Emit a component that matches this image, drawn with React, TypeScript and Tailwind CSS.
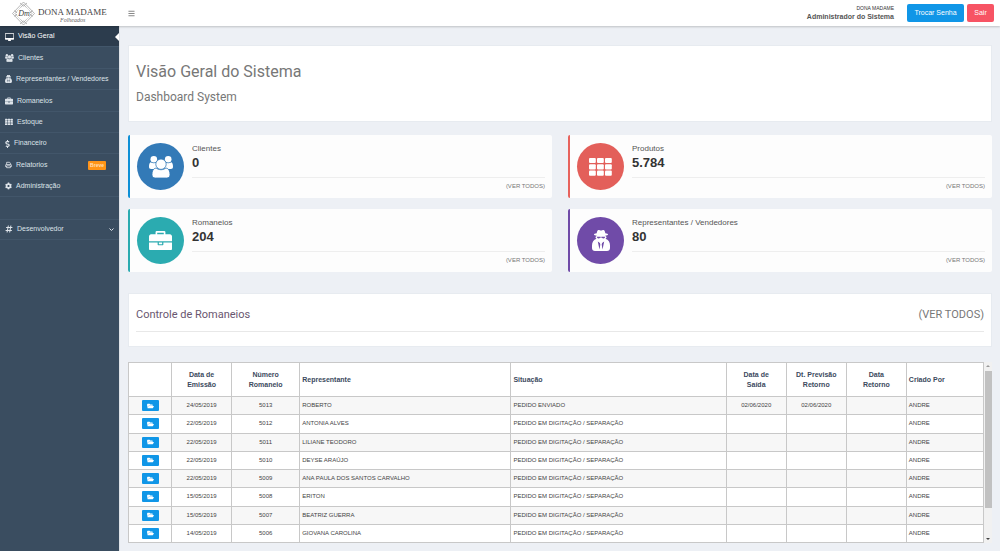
import type { ReactNode } from 'react';
import { FaBars, FaCog, FaDollarSign, FaFolderOpen, FaHashtag } from 'react-icons/fa';

type IconProps = { className?: string };

const DesktopIcon = ({ className }: IconProps) => (
  <svg viewBox="0 0 1920 1664" fill="currentColor" className={className} aria-hidden="true">
    <path d="M1792 992V160q0-13-9.500-22.500T1760 128H160q-13 0-22.500 9.500T128 160v832q0 13 9.500 22.500t22.500 9.500h1600q13 0 22.500-9.500t9.500-22.500zm128-832v1088q0 66-47 113t-113 47h-544q0 37 16 77.500t32 71 16 43.500q0 26-19 45t-45 19H704q-26 0-45-19t-19-45q0-14 16-44t32-70 16-78H160q-66 0-113-47T0 1248V160Q0 94 47 47T160 0h1600q66 0 113 47t47 113z" />
  </svg>
);

const UsersIcon = ({ className }: IconProps) => (
  <svg viewBox="0 0 24 22" fill="currentColor" className={className} aria-hidden="true">
    <circle cx="4.800" cy="3.300" r="3.300" />
    <circle cx="19.200" cy="3.300" r="3.300" />
    <path d="M1.500 6.200c2.200 1.300 4.400 1.300 6.500 0V13H2.200C.7 13 0 12.200 0 10.800 0 8.800.4 6.800 1.500 6.200zM22.500 6.200c-2.200 1.300-4.400 1.300-6.500 0V13h5.800c1.500 0 2.200-.8 2.200-2.200 0-2-.4-4-1.500-4.600z" />
    <g className="stroke-[#3a4d60] group-data-[badge]:stroke-[#337ab7]" strokeWidth="0.800">
      <path d="M7 12c3.300 2.300 6.700 2.300 10 0 2.800.3 4 3.300 4 6.700 0 2.200-1.300 3.300-3.300 3.300H6.300C4.300 22 3 20.900 3 18.700 3 15.300 4.200 12.300 7 12z" />
      <circle cx="12" cy="8.200" r="5.200" />
    </g>
  </svg>
);

const BriefcaseIcon = ({ className }: IconProps) => (
  <svg viewBox="0 0 1792 1536" fill="currentColor" className={className} aria-hidden="true">
    <path d="M640 256h512V128H640v128zm1152 640v480q0 66-47 113t-113 47H160q-66 0-113-47T0 1376V896h672v160q0 26 19 45t45 19h320q26 0 45-19t19-45V896h672zm-768 0v128H768V896h256zm768-480v384H0V416q0-66 47-113t113-47h352V96q0-40 28-68t68-28h576q40 0 68 28t28 68v160h352q66 0 113 47t47 113z" />
  </svg>
);

const GridIcon = ({ className }: IconProps) => (
  <svg viewBox="0 0 23 18" fill="currentColor" className={className} aria-hidden="true">
    {[0, 6.3, 12.6].map((y) =>
      [0, 8, 16].map((x) => <rect key={`${x}-${y}`} x={x} y={y} width="6.800" height="5.100" rx="1" />)
    )}
  </svg>
);

const SpyIcon = ({ className }: IconProps) => (
  <svg viewBox="0 0 18 21" fill="currentColor" className={className} aria-hidden="true">
    <path d="M6.500 0C7.500 0 8 .6 9 .6S10.500 0 11.500 0c1 0 1.500 1.500 1.800 3.200 1.700.3 2.700.7 2.700 1.200 0 .6-1.300 1-2.800 1.300.8.500 1.300 1 1.300 1.800 0 .5-.6.900-1 1.200C16.500 9.500 18 12.300 18 15.500V18c0 1.800-1.200 3-3 3H3c-1.800 0-3-1.200-3-3v-2.500c0-3.200 1.500-6 4.500-6.800-.4-.3-1-.7-1-1.200 0-.8.500-1.300 1.300-1.800C3.300 5.400 2 5 2 4.400c0-.5 1-.9 2.700-1.200C5 1.500 5.500 0 6.500 0z" />
    <path
      className="fill-[#3a4d60] group-data-[badge]:fill-[#704ba8]"
      d="M4.800 6.700h3.500l.7.300.7-.3h3.500l-.4 1.100c-.4.900-2.400.900-2.800 0L9.300 7.500h-.6l-.7.300c-.4.900-2.400.900-2.800 0zM5.800 11.500l2.100 1.400.4 1.500-.8 5zM12.200 11.500l-2.100 1.400-.4 1.500.8 5z"
    />
  </svg>
);

const PrinterIcon = ({ className }: IconProps) => (
  <svg viewBox="0 0 26 24" fill="none" stroke="currentColor" strokeWidth="3" className={className} aria-hidden="true">
    <path d="M6 11V2h11l3 3v6M6 18H2v-5q0-3 3-3h16q3 0 3 3v5h-4M6 15h14v7H6z" />
  </svg>
);

const Logo = () => (
  <a href="#" aria-label="Dona Madame Folheados" className="flex h-full w-30 shrink-0 items-center">
    <svg viewBox="0 0 120 26" className="h-full w-full">
      <g fill="none" stroke="#999" strokeWidth="0.700">
        <path d="M23.500 2 34.500 13.500 23.500 25 12.500 13.500z" />
        <path d="M23.500 4.500 32 13.500 23.500 22.500 15 13.500z" />
        <path d="m20 3 3.500 3L27 3M20 24l3.500-3 3.500 3M14.500 10.500l3 3-3 3M32.500 10.500l-3 3 3 3" />
      </g>
      <circle cx="23.500" cy="13.500" r="6.500" fill="#fff" />
      <text x="24" y="16" textAnchor="middle" fontSize="8" fontStyle="italic" fill="#444" fontFamily="Liberation Serif, serif">
        Dm
      </text>
      <text x="38" y="15" fontSize="9" fill="#444" fontFamily="Liberation Serif, serif">
        DONA MADAME
      </text>
      <text x="60" y="22" fontSize="6" fontStyle="italic" fill="#666" fontFamily="Liberation Serif, serif">
        Folheados
      </text>
    </svg>
  </a>
);

const menu: { label: string; icon: ReactNode; active?: boolean; tag?: string }[] = [
  { label: 'Visão Geral', icon: <DesktopIcon className="h-2 w-[9px] shrink-0" />, active: true },
  { label: 'Clientes', icon: <UsersIcon className="h-2 w-[9px] shrink-0" /> },
  { label: 'Representantes / Vendedores', icon: <SpyIcon className="h-2 w-[7px] shrink-0" /> },
  { label: 'Romaneios', icon: <BriefcaseIcon className="h-2 w-2 shrink-0" /> },
  { label: 'Estoque', icon: <GridIcon className="h-2 w-2 shrink-0" /> },
  { label: 'Financeiro', icon: <FaDollarSign className="h-2 w-[5px] shrink-0" /> },
  { label: 'Relatorios', icon: <PrinterIcon className="h-2 w-[7px] shrink-0" />, tag: 'Breve' },
  { label: 'Administração', icon: <FaCog className="h-2 w-[7px] shrink-0" /> },
];

const stats = [
  { label: 'Clientes', value: '0', border: 'border-[#0d8fd6]', circle: 'bg-[#337ab7]', icon: <UsersIcon className="w-6" /> },
  { label: 'Produtos', value: '5.784', border: 'border-[#e7625c]', circle: 'bg-[#e35f5a]', icon: <GridIcon className="w-[23px]" /> },
  { label: 'Romaneios', value: '204', border: 'border-[#2babb0]', circle: 'bg-[#2babb0]', icon: <BriefcaseIcon className="w-[23px]" /> },
  { label: 'Representantes / Vendedores', value: '80', border: 'border-[#704ba8]', circle: 'bg-[#704ba8]', icon: <SpyIcon className="w-[18px]" /> },
];

const columns = [
  { label: '', width: 'w-[43px]' },
  { label: 'Data de\nEmissão', width: 'w-[60px]' },
  { label: 'Número\nRomaneio', width: 'w-[68px]' },
  { label: 'Representante', width: 'w-[211px]', left: true },
  { label: 'Situação', width: 'w-[215px]', left: true },
  { label: 'Data de\nSaída', width: 'w-[60px]' },
  { label: 'Dt. Previsão\nRetorno', width: 'w-[60px]' },
  { label: 'Data\nRetorno', width: 'w-[60px]' },
  { label: 'Criado Por', width: 'w-[77px]', left: true },
];

const digitacao = 'PEDIDO EM DIGITAÇÃO / SEPARAÇÃO';

const rows = [
  ['24/05/2019', '5013', 'ROBERTO', 'PEDIDO ENVIADO', '02/06/2020', '02/06/2020', '', 'ANDRE'],
  ['22/05/2019', '5012', 'ANTONIA ALVES', digitacao, '', '', '', 'ANDRE'],
  ['22/05/2019', '5011', 'LILIANE TEODORO', digitacao, '', '', '', 'ANDRE'],
  ['22/05/2019', '5010', 'DEYSE ARAÚJO', digitacao, '', '', '', 'ANDRE'],
  ['22/05/2019', '5009', 'ANA PAULA DOS SANTOS CARVALHO', digitacao, '', '', '', 'ANDRE'],
  ['15/05/2019', '5008', 'ERITON', digitacao, '', '', '', 'ANDRE'],
  ['15/05/2019', '5007', 'BEATRIZ GUERRA', digitacao, '', '', '', 'ANDRE'],
  ['14/05/2019', '5006', 'GIOVANA CAROLINA', digitacao, '', '', '', 'ANDRE'],
];

const Header = () => (
  <header className="relative z-10 flex h-[26px] items-center bg-white shadow-[0_1px_2px_rgba(0,0,0,0.2)]">
    <Logo />
    <button type="button" aria-label="Menu" className="ml-2 text-[#888]">
      <FaBars className="h-[7px] w-[7px]" />
    </button>
    <div className="ml-auto mr-[13px] text-right">
      <p className="text-[5px] leading-[7px] text-[#333]">DONA MADAME</p>
      <p className="text-[7px] font-bold leading-[10px] text-[#555]">Administrador do Sistema</p>
    </div>
    <div className="mr-[6px] flex gap-[3px] text-[7px] text-white">
      <button type="button" className="h-[18px] w-[57px] rounded-[2px] bg-[#1096e7]">
        Trocar Senha
      </button>
      <button type="button" className="h-[18px] w-[27px] rounded-[2px] bg-[#f75464]">
        Sair
      </button>
    </div>
  </header>
);

const Sidebar = () => (
  <nav className="w-30 shrink-0 border-r border-[#dfe3e8] bg-[#3a4d60] text-[7px] text-[#dde3e9]">
    <div className="grid h-[214px] grid-cols-1 grid-rows-10">
      {menu.map((item) => (
        <a
          key={item.label}
          href="#"
          className={`relative flex items-center gap-1 border-b border-[#42566a] pl-[5px] pr-[13px] pt-px ${
            item.active ? 'bg-[#2c3c4d] text-white' : ''
          }`}
        >
          {item.icon}
          <span className="whitespace-nowrap">{item.label}</span>
          {item.tag && (
            <span className="ml-auto rounded-[1px] bg-[#ff9416] px-[2px] text-[5px] font-bold leading-[9px] text-[#ffdfb5]">
              {item.tag}
            </span>
          )}
          {item.active && (
            <span className="absolute right-0 border-y-4 border-r-4 border-y-transparent border-r-white" />
          )}
        </a>
      ))}
      <a href="#" className="row-start-10 flex items-center gap-1 border-y border-[#42566a] pl-[5px] pr-[5px]">
        <FaHashtag className="h-2 w-2 shrink-0" />
        Desenvolvedor
        <svg viewBox="0 0 10 6" fill="none" stroke="currentColor" className="ml-auto w-[5px]" aria-hidden="true">
          <path strokeWidth="2" d="m1 1 4 4 4-4" />
        </svg>
      </a>
    </div>
  </nav>
);

const RomaneiosTable = () => (
  <div className="mt-[15px] flex h-[181px] overflow-hidden">
    <div className="min-w-0 flex-1 overflow-hidden">
      <table className="h-[181px] w-full table-fixed border-collapse bg-white text-[6px] text-[#444]">
        <thead>
          <tr className="h-[34px] text-[7px] leading-[10px] text-[#3c4a5e]">
            {columns.map((col) => (
              <th
                key={col.label}
                className={`whitespace-pre-line border border-[#c8c8c8] px-[2px] ${col.width} ${col.left ? 'text-left' : 'text-center'}`}
              >
                {col.label}
              </th>
            ))}
          </tr>
        </thead>
        <tbody>
          {rows.map((row) => (
            <tr key={row[1]} className="h-[18px] odd:bg-[#f7f7f7]">
              <td className="border border-[#c8c8c8] p-0">
                <button
                  type="button"
                  aria-label={`Abrir romaneio ${row[1]}`}
                  className="mx-auto flex h-[11px] w-[17px] items-center justify-center rounded-[1px] bg-[#1096e7] text-white"
                >
                  <FaFolderOpen className="h-[6px] w-[7px]" />
                </button>
              </td>
              {row.map((cell, idx) => (
                <td
                  key={idx}
                  className={`border border-[#c8c8c8] px-[2px] py-0 ${columns[idx + 1].left ? 'text-left' : 'text-center'}`}
                >
                  {cell}
                </td>
              ))}
            </tr>
          ))}
        </tbody>
      </table>
    </div>
    <div className="flex w-2 flex-col items-center bg-[#f1f1f1] py-[3px]">
      <span className="border-x-2 border-b-2 border-x-transparent border-b-[#999]" />
      <span className="mt-1 h-[137px] w-[7px] bg-[#c1c1c1]" />
      <span className="mt-auto border-x-2 border-t-2 border-x-transparent border-t-[#444]" />
    </div>
  </div>
);

const App = () => (
  <div className="flex min-h-screen flex-col bg-[#edf0f5] font-['Liberation_Sans',Arial,sans-serif]">
    <Header />
    <div className="flex flex-1">
      <Sidebar />
      <main className="min-w-0 flex-1 px-2 pb-2 pt-[19px]">
        <section className="h-[77px] border border-[#e7ebf0] bg-white px-[7px] pt-4 font-[Roboto,sans-serif] text-[#777]">
          <h1 className="text-base leading-5">Visão Geral do Sistema</h1>
          <h2 className="mt-[7px] text-xs leading-4">Dashboard System</h2>
        </section>

        <div className="mt-[13px] grid grid-cols-2 gap-x-4 gap-y-[11px]">
          {stats.map((stat) => (
            <section key={stat.label} className={`flex h-[63px] rounded-[2px] border-l-2 bg-[#fdfdfd] pl-[7px] pr-[7px] pt-2 ${stat.border}`}>
              <div data-badge className={`group flex h-[47px] w-[47px] shrink-0 items-center justify-center rounded-full text-white ${stat.circle}`}>
                {stat.icon}
              </div>
              <div className="ml-2 flex-1 text-[#555]">
                <p className="text-[8px] leading-[11px]">{stat.label}</p>
                <p className="mt-px text-[13px] font-bold leading-4 text-[#333]">{stat.value}</p>
                <div className="mt-[6px] border-t border-[#eee] pt-[3px] text-right">
                  <a href="#" className="block text-[6px] leading-[10px] text-[#777]">
                    (VER TODOS)
                  </a>
                </div>
              </div>
            </section>
          ))}
        </div>

        <section className="mt-[21px] h-[54px] border border-[#e7ebf0] bg-white px-[7px] pt-[13px] font-[Roboto,sans-serif] text-[11px] leading-4">
          <div className="flex justify-between border-b border-[#e8e8e8] pb-2">
            <h2 className="text-[#69566f]">Controle de Romaneios</h2>
            <a href="#" className="text-[#777]">
              (VER TODOS)
            </a>
          </div>
        </section>

        <RomaneiosTable />
      </main>
    </div>
  </div>
);

export default App;
